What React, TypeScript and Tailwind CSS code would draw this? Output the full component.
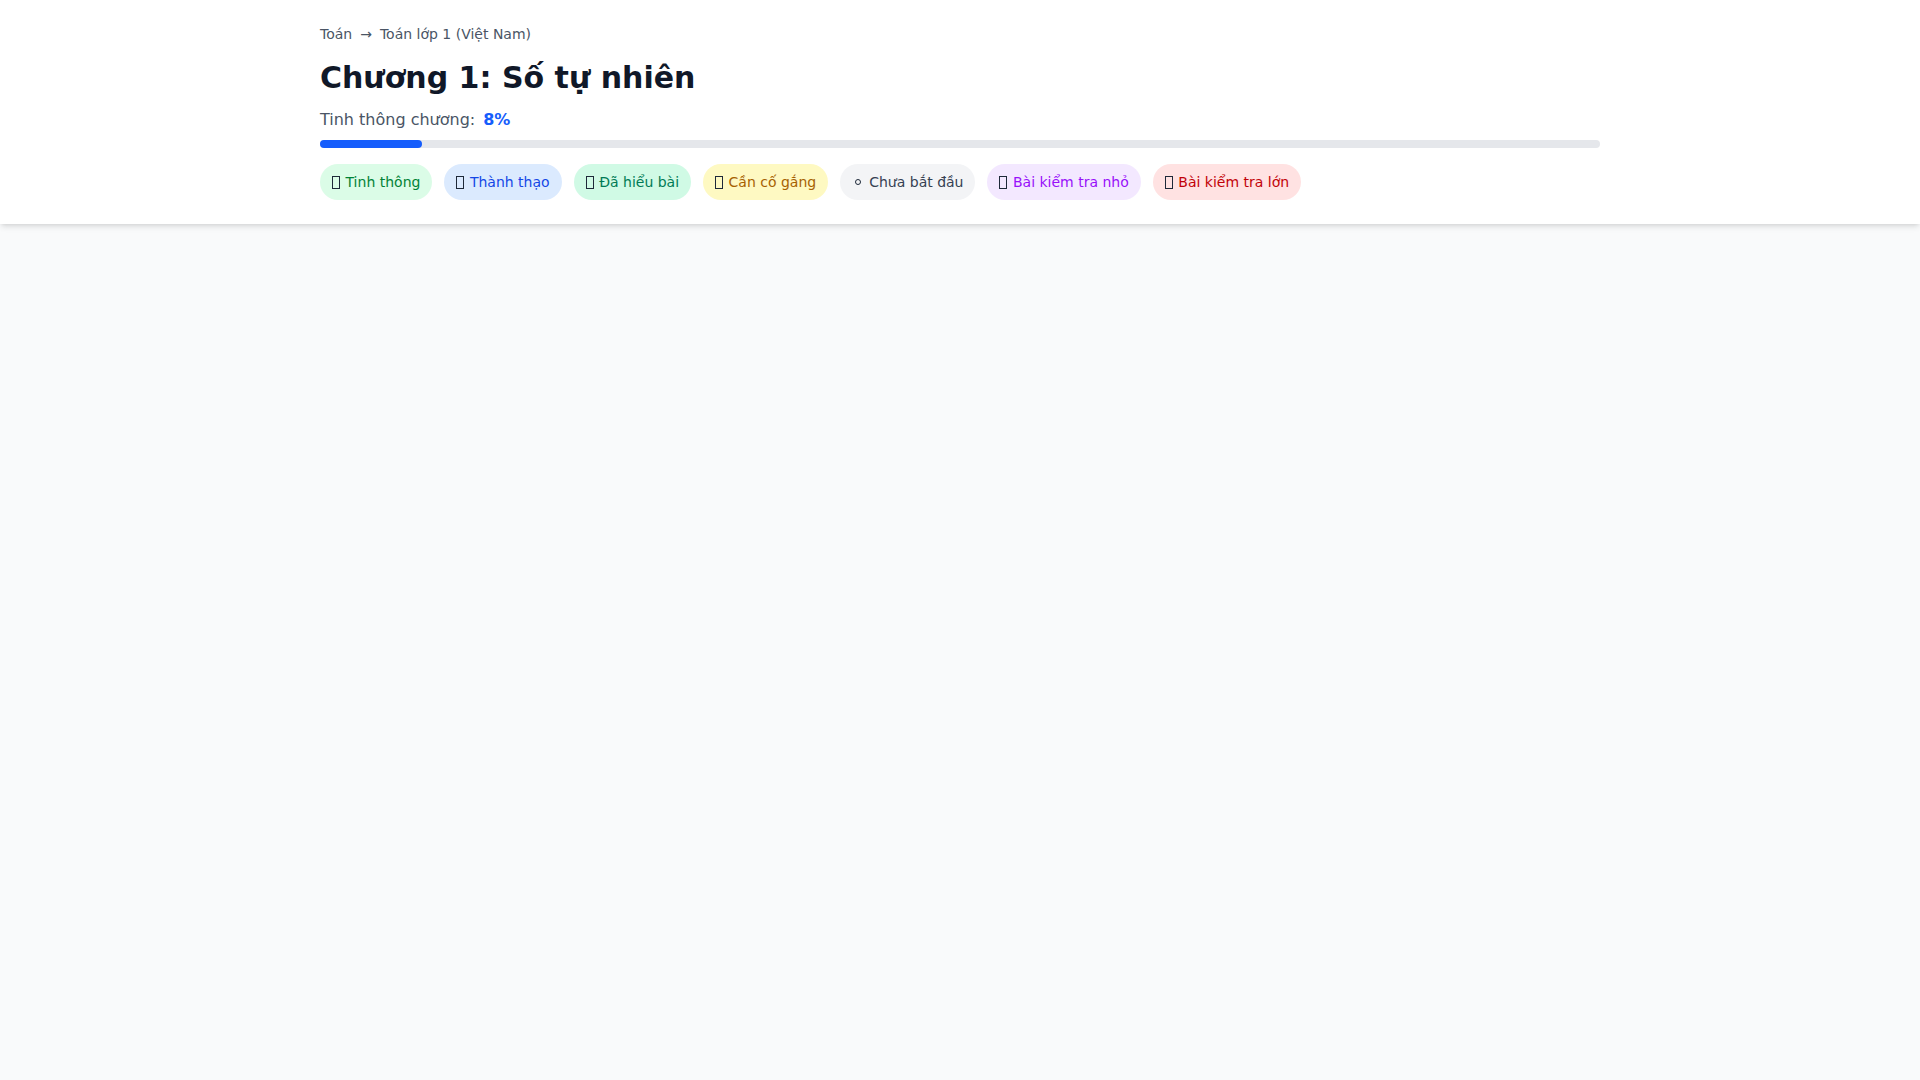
import React from "react";

const badges = [
  { icon: "box", label: "Tinh thông", cls: "bg-green-100 text-green-700" },
  { icon: "box", label: "Thành thạo", cls: "bg-blue-100 text-blue-700" },
  { icon: "box", label: "Đã hiểu bài", cls: "bg-emerald-100 text-emerald-700" },
  { icon: "box", label: "Cần cố gắng", cls: "bg-yellow-100 text-yellow-700" },
  { icon: "circle", label: "Chưa bắt đầu", cls: "bg-gray-100 text-gray-700" },
  { icon: "box", label: "Bài kiểm tra nhỏ", cls: "bg-purple-100 text-purple-600" },
  { icon: "box", label: "Bài kiểm tra lớn", cls: "bg-red-100 text-red-700" },
];

export default function App() {
  return (
    <div className="min-h-screen bg-gray-50 font-['DejaVu_Sans',sans-serif]">
      <header className="bg-white shadow-md">
        <div className="mx-auto max-w-[1280px] pt-6 pb-6">
          <nav className="flex items-center gap-2 text-sm text-gray-600">
            <span>Toán</span>
            <span>→</span>
            <span>Toán lớp 1 (Việt Nam)</span>
          </nav>
          <h1 className="mt-4 text-3xl font-bold text-gray-900">Chương 1: Số tự nhiên</h1>
          <div className="mt-3 flex items-center gap-2 text-base">
            <span className="text-gray-600">Tinh thông chương:</span>
            <span className="font-bold text-blue-600">8%</span>
          </div>
          <div className="mt-2 h-2 w-full rounded-full bg-gray-200">
            <div className="h-2 rounded-full bg-blue-600" style={{ width: "8%" }} />
          </div>
          <div className="mt-4 flex flex-wrap gap-3">
            {badges.map((b) => (
              <span key={b.label} className={`flex items-center rounded-full px-3 py-2 text-sm ${b.cls}`}>
                {b.icon === "box" ? (
                  <span className="mr-[5.5px] inline-block h-[13px] w-[8px] border border-gray-800" />
                ) : (
                  <span className="mr-2 ml-[3px] inline-block h-[6px] w-[6px] rounded-full border border-gray-800" />
                )}
                <span>{b.label}</span>
              </span>
            ))}
          </div>
        </div>
      </header>
    </div>
  );
}
